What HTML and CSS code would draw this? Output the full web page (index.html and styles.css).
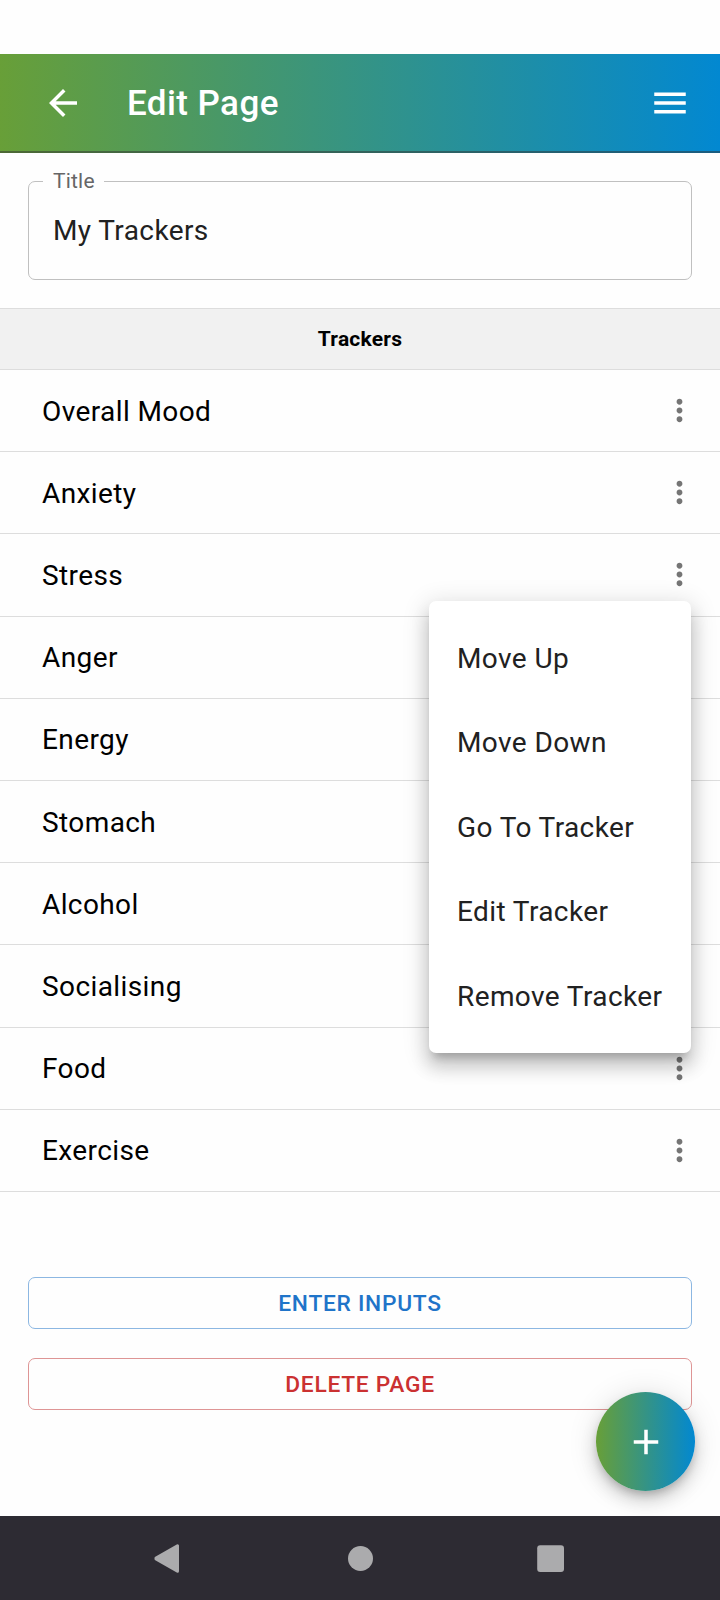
FILE: index.html
```html
<!DOCTYPE html>
<html lang="en">
<head>
<meta charset="utf-8">
<title>Edit Page</title>
<link rel="stylesheet" href="styles.css">
</head>
<body>
<svg class="defs" aria-hidden="true">
  <symbol id="more" viewBox="0 0 24 24"><path d="M12 8c1.100 0 2-.9 2-2s-.9-2-2-2-2 .9-2 2 .9 2 2 2zm0 2c-1.100 0-2 .9-2 2s.9 2 2 2 2-.9 2-2-.9-2-2-2zm0 6c-1.100 0-2 .9-2 2s.9 2 2 2 2-.9 2-2-.9-2-2-2z"/></symbol>
</svg>
<div class="screen">
  <header class="appbar">
    <svg class="icon back" viewBox="0 0 24 24"><path d="M20 11H7.830l5.590-5.590L12 4l-8 8 8 8 1.410-1.410L7.830 13H20v-2z"/></svg>
    <h1 class="heading">Edit Page</h1>
    <svg class="icon" viewBox="0 0 24 24"><path d="M3 18h18v-2H3v2zm0-5h18v-2H3v2zm0-7v2h18V6H3z"/></svg>
  </header>
  <main class="content">
    <fieldset class="field">
      <legend class="label">Title</legend>
      <div class="value">My Trackers</div>
    </fieldset>
    <h2 class="section">Trackers</h2>
    <ul class="list">
      <li class="row"><span>Overall Mood</span><svg class="more"><use href="#more"/></svg></li>
      <li class="row"><span>Anxiety</span><svg class="more"><use href="#more"/></svg></li>
      <li class="row"><span>Stress</span><svg class="more"><use href="#more"/></svg></li>
      <li class="row"><span>Anger</span><svg class="more"><use href="#more"/></svg></li>
      <li class="row"><span>Energy</span><svg class="more"><use href="#more"/></svg></li>
      <li class="row"><span>Stomach</span><svg class="more"><use href="#more"/></svg></li>
      <li class="row"><span>Alcohol</span><svg class="more"><use href="#more"/></svg></li>
      <li class="row"><span>Socialising</span><svg class="more"><use href="#more"/></svg></li>
      <li class="row"><span>Food</span><svg class="more"><use href="#more"/></svg></li>
      <li class="row"><span>Exercise</span><svg class="more"><use href="#more"/></svg></li>
    </ul>
    <div class="actions">
      <button class="btn primary">ENTER INPUTS</button>
      <button class="btn danger">DELETE PAGE</button>
    </div>
  </main>
  <nav class="navbar">
    <svg viewBox="0 0 720 84" width="720" height="84">
      <path d="M156 42.300L177.500 30V55.500L156 43.200Z" transform="translate(0 -.2)" stroke="#ababad" stroke-width="3" stroke-linejoin="round"/>
      <circle cx="360.500" cy="42.500" r="12.500"/>
      <rect x="537.200" y="29.200" width="26.800" height="26.800" rx="3"/>
    </svg>
  </nav>
  <ul class="menu">
    <li>Move Up</li>
    <li>Move Down</li>
    <li>Go To Tracker</li>
    <li>Edit Tracker</li>
    <li>Remove Tracker</li>
  </ul>
  <button class="fab" aria-label="Add tracker">
    <svg class="icon" viewBox="0 0 24 24"><path d="M19 13h-6v6h-2v-6H5v-2h6V5h2v6h6v2z"/></svg>
  </button>
</div>
</body>
</html>
```
FILE: styles.css
```css
* {
  box-sizing: border-box;
  margin: 0;
  padding: 0;
}

body {
  background: #fefefe;
  color: #000;
  font: 400 28px/42px Roboto, sans-serif;
  letter-spacing: .4px;
}

ul {
  list-style: none;
}

.defs {
  position: absolute;
  width: 0;
  height: 0;
}

.screen {
  position: relative;
  display: flex;
  flex-direction: column;
  width: 720px;
  height: 1600px;
  padding-top: 54px;
  overflow: hidden;
}

.appbar {
  display: flex;
  align-items: center;
  height: 99px;
  padding: 0 29px 2px 42px;
  color: #fff;
  background: linear-gradient(90deg, #689f38, #0288d1);
  box-shadow: inset 0 -2px rgba(50, 50, 50, .5);
}

.icon {
  display: block;
  width: 42px;
  height: 42px;
  fill: #fff;
}

.heading {
  flex: 1;
  margin-left: 43px;
  padding-top: 3px;
  font-size: 35px;
  font-weight: 500;
  line-height: 56px;
  letter-spacing: .42px;
}

.content {
  flex: 1;
}

.field {
  height: 112px;
  margin: 15px 28px 28px;
  padding: 0 24px;
  border: 1px solid #c0c0c0;
  border-radius: 7px;
  color: #212121;
}

.label {
  height: 26px;
  margin-left: -10px;
  padding: 0 9px 0 10px;
  color: #666;
  font-size: 21px;
  line-height: 26px;
  letter-spacing: .2px;
}

.value {
  padding-top: 16px;
}

.section {
  height: 62px;
  border-top: 1px solid #ddd;
  border-bottom: 1px solid #ddd;
  background: #f1f1f1;
  font-size: 21px;
  font-weight: 700;
  line-height: 60px;
  letter-spacing: .2px;
  text-align: center;
}

.row {
  display: flex;
  align-items: center;
  justify-content: space-between;
  height: 82.2px;
  padding: 0 23.200px 0 42px;
  border-bottom: 1px solid #ddd;
}

.row span {
  padding-top: 2px;
}

.more {
  width: 35px;
  height: 35px;
  fill: #757575;
}

.actions {
  display: grid;
  gap: 29px;
  padding: 85px 28px 0;
}

.btn {
  height: 52px;
  padding-top: 2px;
  border: 1px solid;
  border-radius: 7px;
  background: none;
  font: 500 22.750px/40px Roboto, sans-serif;
  letter-spacing: .72px;
}

.primary {
  border-color: #8cb7e2;
  color: #1f74c9;
}

.danger {
  border-color: #de9595;
  color: #cb3131;
}

.navbar {
  height: 84px;
  background: #2d2b33;
  fill: #ababad;
}

.navbar svg {
  display: block;
}

.menu {
  position: absolute;
  top: 601px;
  left: 429px;
  width: 262px;
  height: 452px;
  padding: 15.700px 28px 12px;
  border-radius: 7px;
  background: #fff;
  color: #212121;
  line-height: 84.5px;
  white-space: nowrap;
  box-shadow: 0 9px 9px -5px rgba(0, 0, 0, .2), 0 14px 17px 2px rgba(0, 0, 0, .14), 0 5px 24px 4px rgba(0, 0, 0, .12);
}

.fab {
  position: absolute;
  top: 1392px;
  left: 596px;
  display: grid;
  place-items: center;
  width: 99px;
  height: 99px;
  border: 0;
  border-radius: 50%;
  background: linear-gradient(90deg, #689f38, #0288d1);
  box-shadow: 0 5px 9px -2px rgba(0, 0, 0, .2), 0 10px 17px rgba(0, 0, 0, .14), 0 2px 31px rgba(0, 0, 0, .12);
}
```
